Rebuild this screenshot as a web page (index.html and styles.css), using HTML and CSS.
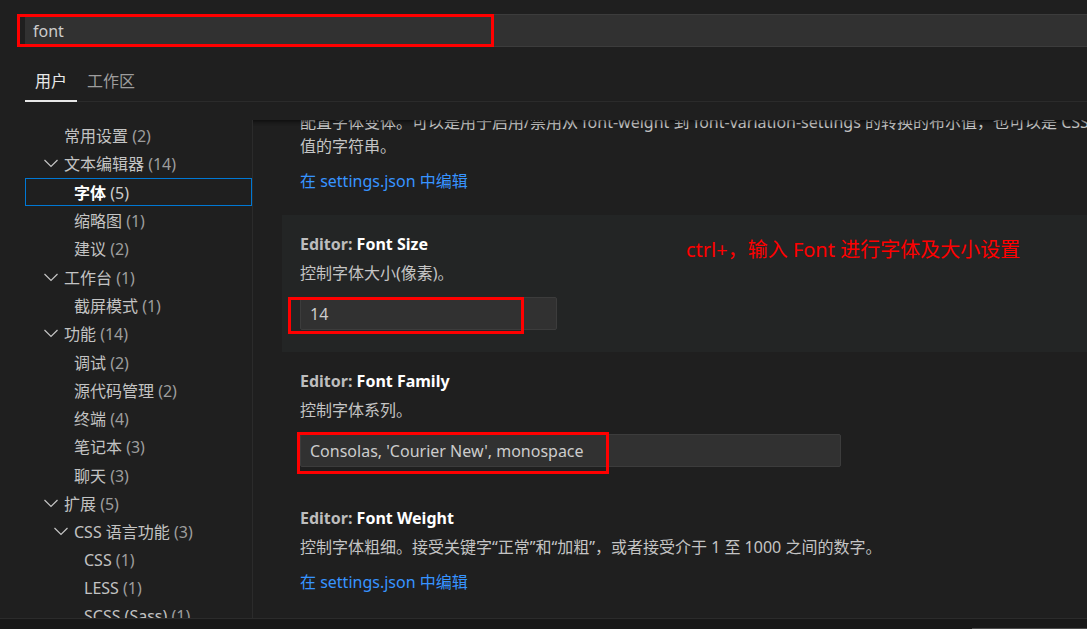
FILE: index.html
```html
<!DOCTYPE html>
<html lang="zh-CN">
<head>
<meta charset="utf-8">
<title>设置</title>
<link rel="stylesheet" href="styles.css">
</head>
<body>
<div class="editor">
  <header class="header">
    <div class="search">
      <span class="search-text">font</span>
      <div class="mark mark-search"></div>
    </div>
    <div class="tabs">
      <div class="tab active">用户</div>
      <div class="tab">工作区</div>
    </div>
  </header>

  <div class="body">
    <nav class="toc">
      <div class="toc-item l1"><span class="twisty"></span><span class="label">常用设置 <span class="count">(2)</span></span></div>
      <div class="toc-item l1"><span class="twisty"><svg viewBox="0 0 16 16"><path d="M1.5 5 L8 11.5 L14.5 5"/></svg></span><span class="label">文本编辑器 <span class="count">(14)</span></span></div>
      <div class="toc-item l2 selected"><span class="label"><b>字体</b> <span class="count">(5)</span></span></div>
      <div class="toc-item l2"><span class="label">缩略图 <span class="count">(1)</span></span></div>
      <div class="toc-item l2"><span class="label">建议 <span class="count">(2)</span></span></div>
      <div class="toc-item l1"><span class="twisty"><svg viewBox="0 0 16 16"><path d="M1.5 5 L8 11.5 L14.5 5"/></svg></span><span class="label">工作台 <span class="count">(1)</span></span></div>
      <div class="toc-item l2"><span class="label">截屏模式 <span class="count">(1)</span></span></div>
      <div class="toc-item l1"><span class="twisty"><svg viewBox="0 0 16 16"><path d="M1.5 5 L8 11.5 L14.5 5"/></svg></span><span class="label">功能 <span class="count">(14)</span></span></div>
      <div class="toc-item l2"><span class="label">调试 <span class="count">(2)</span></span></div>
      <div class="toc-item l2"><span class="label">源代码管理 <span class="count">(2)</span></span></div>
      <div class="toc-item l2"><span class="label">终端 <span class="count">(4)</span></span></div>
      <div class="toc-item l2"><span class="label">笔记本 <span class="count">(3)</span></span></div>
      <div class="toc-item l2"><span class="label">聊天 <span class="count">(3)</span></span></div>
      <div class="toc-item l1"><span class="twisty"><svg viewBox="0 0 16 16"><path d="M1.5 5 L8 11.5 L14.5 5"/></svg></span><span class="label">扩展 <span class="count">(5)</span></span></div>
      <div class="toc-item l2"><span class="twisty"><svg viewBox="0 0 16 16"><path d="M1.5 5 L8 11.5 L14.5 5"/></svg></span><span class="label">CSS 语言功能 <span class="count">(3)</span></span></div>
      <div class="toc-item l3"><span class="label">CSS <span class="count">(1)</span></span></div>
      <div class="toc-item l3"><span class="label">LESS <span class="count">(1)</span></span></div>
      <div class="toc-item l3"><span class="label">SCSS (Sass) <span class="count">(1)</span></span></div>
    </nav>

    <main class="content">
      <div class="list">
        <section class="setting setting-first">
          <div class="desc">
            <div class="line">配置字体变体。可以是用于启用/禁用从 font-weight 到 font-variation-settings 的转换的布尔值，也可以是 CSS 'font-variation-settings' 属性</div>
            <div class="line">值的字符串。</div>
          </div>
          <div class="link">在 settings.json 中编辑</div>
        </section>

        <section class="setting focused">
          <div class="title"><span class="cat">Editor: </span><span class="name">Font Size</span></div>
          <div class="desc"><div class="line">控制字体大小(像素)。</div></div>
          <div class="input input-size">
            <span>14</span>
            <div class="mark mark-size"></div>
          </div>
          <div class="note">ctrl+，输入 Font 进行字体及大小设置</div>
        </section>

        <section class="setting">
          <div class="title"><span class="cat">Editor: </span><span class="name">Font Family</span></div>
          <div class="desc"><div class="line">控制字体系列。</div></div>
          <div class="input input-family">
            <span>Consolas, 'Courier New', monospace</span>
            <div class="mark mark-family"></div>
          </div>
        </section>

        <section class="setting">
          <div class="title"><span class="cat">Editor: </span><span class="name">Font Weight</span></div>
          <div class="desc"><div class="line">控制字体粗细。接受关键字“正常”和“加粗”，或者接受介于 1 至 1000 之间的数字。</div></div>
          <div class="link">在 settings.json 中编辑</div>
        </section>
      </div>
    </main>
  </div>

  <footer class="footer"><div class="scroll-hint"></div></footer>
</div>
</body>
</html>
```

FILE: styles.css
```css
* { box-sizing: border-box; }

html, body {
  margin: 0;
  height: 100%;
  background: #1f1f1f;
  overflow: hidden;
}

body {
  font-family: "Noto Sans", "Noto Sans CJK SC", sans-serif;
  font-size: 16px;
  color: #cccccc;
}

.editor {
  display: flex;
  flex-direction: column;
  height: 629px;
}

/* header */
.header {
  padding: 14px 0 0 25px;
}

.search {
  position: relative;
  height: 33px;
  background: #313131;
  border-top: 1px solid #3c3c3c;
  border-bottom: 1px solid #3c3c3c;
  display: flex;
  align-items: center;
  padding-left: 8px;
  color: #cccccc;
}

.tabs {
  display: flex;
  align-items: flex-end;
  height: 55px;
  border-bottom: 1px solid #2b2b2b;
}

.tab {
  padding: 0 10px 7px;
  line-height: 24px;
  font-size: 16px;
  color: #9d9d9d;
  border-bottom: 2px solid transparent;
  margin-bottom: -1px;
}

.tab.active {
  color: #e7e7e7;
  border-bottom-color: #e7e7e7;
}

/* red annotation boxes */
.mark {
  position: absolute;
  border: 3px solid #ff0000;
  pointer-events: none;
}
.mark-search { left: -8px; top: -1px; width: 477px; height: 33px; }
.mark-size { left: -13px; top: -1px; width: 236px; height: 37px; }
.mark-family { left: -4px; top: -3px; width: 312px; height: 42px; }

/* body */
.body {
  display: flex;
  margin-top: 18px;
  height: 498px;
  padding-left: 25px;
}

.toc {
  flex: none;
  width: 228px;
  border-right: 1px solid #2b2b2b;
  overflow: hidden;
  padding-top: 1px;
}

.toc-item {
  display: flex;
  align-items: center;
  height: 28.3px;
  white-space: nowrap;
  border: 1px solid transparent;
  color: #c3c3c3;
}
.toc-item.l1 { padding-left: 17px; }
.toc-item.l2 { padding-left: 27px; }
.toc-item.l2:not(:has(.twisty)) { padding-left: 48px; }
.toc-item.l3 { padding-left: 58px; }

.twisty {
  flex: none;
  width: 16px;
  height: 16px;
  margin-right: 5px;
  display: flex;
}
.twisty svg {
  width: 16px;
  height: 16px;
  fill: none;
  stroke: #c5c5c5;
  stroke-width: 1.2;
}

.count { color: #9d9d9d; }

.toc-item.selected {
  border-color: #0078d4;
}
.toc-item.selected b {
  color: #ffffff;
  font-weight: 700;
}
.toc-item.selected .count { color: #cccccc; }

/* content */
.content {
  flex: 1;
  position: relative;
  overflow: hidden;
}
.content::before {
  content: "";
  position: absolute;
  left: 0;
  right: 0;
  top: 0;
  height: 6px;
  box-shadow: inset 0 6px 6px -6px #000;
  z-index: 2;
}

.list {
  margin-top: -32px;
  padding-left: 29px;
}

.setting {
  position: relative;
  padding: 17px 0 22px 18px;
}
.setting.focused {
  background: #232525;
}

.title {
  line-height: 24px;
  font-weight: 700;
  white-space: nowrap;
}
.cat { color: #bdbdbd; }
.name { color: #ffffff; }

.desc {
  margin-top: 5px;
  line-height: 24px;
  color: #c4c4c4;
}
.desc .line { white-space: nowrap; }

.link {
  margin-top: 11px;
  line-height: 24px;
  color: #3794ff;
}

.input {
  position: relative;
  margin-top: 12px;
  height: 33px;
  background: #313131;
  border: 1px solid #3c3c3c;
  border-radius: 2px;
  display: flex;
  align-items: center;
  padding-left: 9px;
  color: #cccccc;
}
.input-size { width: 257px; }
.input-family { width: 541px; }

.note {
  position: absolute;
  left: 404px;
  top: 21px;
  line-height: 28px;
  font-size: 20px;
  color: #ff0000;
  white-space: nowrap;
}

/* footer */
.footer {
  height: 11px;
  border-top: 1px solid #2b2b2b;
  background: #181818;
  display: flex;
  justify-content: flex-end;
  align-items: flex-end;
}
.scroll-hint {
  width: 115px;
  height: 1px;
  background: #4a4a4a;
}
```
